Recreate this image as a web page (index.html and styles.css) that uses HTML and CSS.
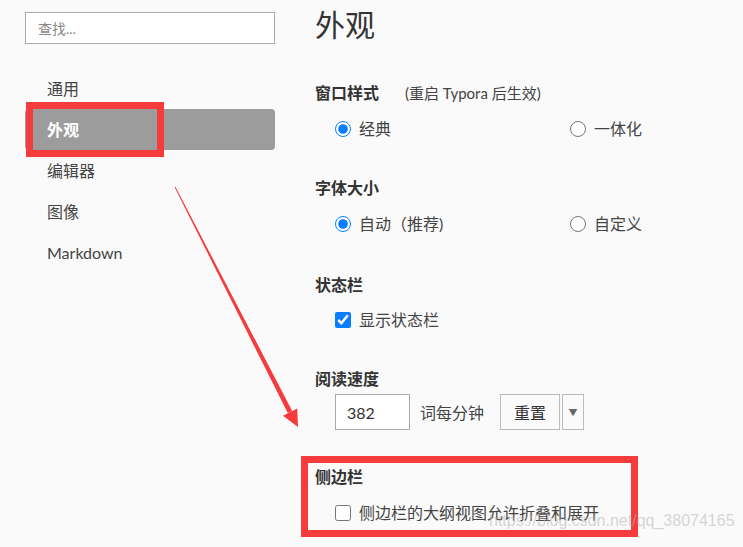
FILE: index.html
```html
<!DOCTYPE html>
<html lang="zh-CN">
<head>
    <meta charset="UTF-8">
    <title>偏好设置 - 外观</title>
    <link rel="stylesheet" href="styles.css">
</head>
<body>

    <div class="prefs">
        <aside class="sidebar">
            <input class="search" type="text" placeholder="查找...">
            <ul class="nav">
                <li class="nav-item">通用</li>
                <li class="nav-item active">外观<span class="mark mark-nav"></span></li>
                <li class="nav-item">编辑器</li>
                <li class="nav-item">图像</li>
                <li class="nav-item">Markdown</li>
            </ul>
        </aside>

        <main class="content">
            <h1 class="title">外观</h1>

            <section class="group">
                <h2 class="group-title">窗口样式<span class="note">(重启 Typora 后生效)</span></h2>
                <div class="options">
                    <label class="option"><input type="radio" name="win" checked>经典</label>
                    <label class="option"><input type="radio" name="win">一体化</label>
                </div>
            </section>

            <section class="group">
                <h2 class="group-title">字体大小</h2>
                <div class="options">
                    <label class="option"><input type="radio" name="size" checked>自动（推荐)</label>
                    <label class="option"><input type="radio" name="size">自定义</label>
                </div>
            </section>

            <section class="group group-status">
                <h2 class="group-title">状态栏</h2>
                <div class="options">
                    <label class="option"><input type="checkbox" checked>显示状态栏</label>
                </div>
            </section>

            <section class="group group-speed">
                <h2 class="group-title">阅读速度</h2>
                <div class="speed">
                    <input class="speed-input" type="text" value="382">
                    <span class="speed-unit">词每分钟</span>
                    <div class="split-btn">
                        <button class="btn">重置</button>
                        <button class="btn btn-drop">&#9660;</button>
                    </div>
                </div>
            </section>

            <section class="group group-sidebar">
                <span class="mark mark-section"></span>
                <h2 class="group-title">侧边栏</h2>
                <div class="options">
                    <label class="option"><input type="checkbox">侧边栏的大纲视图允许折叠和展开</label>
                </div>
            </section>
        </main>
    </div>

    <!-- annotation arrow drawn over the page -->
    <svg class="arrow" width="743" height="547" viewBox="0 0 743 547">
        <polygon points="174.6,187.2 175.4,186.8 292.2,410.9 287.8,413.1" fill="#f53b3b"/>
        <polygon points="283,415.8 297.2,408.4 298,427" fill="#f53b3b"/>
    </svg>

    <div class="watermark">https://blog.csdn.net/qq_38074165</div>

</body>
</html>
```

FILE: styles.css
```css
body {
    margin: 0;
    background-color: #fafafa;
    font-family: "Lato", "Noto Sans CJK SC", sans-serif;
    color: #444;
    font-size: 16px;
    position: relative;
    width: 743px;
    height: 547px;
    overflow: hidden;
}

.prefs {
    display: flex;
}

/* --- sidebar --- */
.sidebar {
    width: 250px;
    padding: 12px 25px 0;
    flex-shrink: 0;
}

.search {
    display: block;
    width: 250px;
    height: 32px;
    box-sizing: border-box;
    border: 1px solid #aaa;
    background: #fff;
    padding: 0 12px;
    font-family: inherit;
    font-size: 14px;
    color: #444;
    outline: none;
}

.search::placeholder {
    color: #888;
}

.nav {
    list-style: none;
    margin: 24px 0 0;
    padding: 0;
}

.nav-item {
    position: relative;
    height: 41px;
    line-height: 41px;
    padding-left: 22px;
    border-radius: 4px;
}

.nav-item.active {
    background-color: #9c9c9c;
    color: #fff;
    font-weight: bold;
}

/* red annotation boxes */
.mark {
    position: absolute;
    border: 7px solid #f53b3b;
    box-sizing: border-box;
    pointer-events: none;
}

.mark-nav {
    left: 1px;
    top: -7px;
    width: 138px;
    height: 55px;
}

.mark-section {
    left: -14px;
    top: -10px;
    width: 337px;
    height: 81px;
}

/* --- main content --- */
.content {
    padding-left: 15px;
    flex-grow: 1;
    min-width: 0;
}

.title {
    margin: 4px 0 38px;
    font-size: 30px;
    line-height: 40px;
    font-weight: normal;
    color: #333;
}

.group {
    position: relative;
    margin-bottom: 36px;
}

.group-status {
    margin-top: 38px;
}

.group-title {
    margin: 0;
    font-size: 16px;
    line-height: 22px;
    font-weight: bold;
    color: #333;
}

.note {
    font-weight: normal;
    font-size: 15px;
    color: #444;
    margin-left: 26px;
}

.options {
    display: flex;
    margin-top: 13px;
    padding-left: 20px;
}

.group-status .options {
    margin-top: 12px;
}

.option {
    display: flex;
    align-items: center;
    height: 24px;
    line-height: 24px;
    white-space: nowrap;
}

.option:first-child:not(:last-child) {
    width: 235px;
}

.option input {
    width: 16px;
    height: 16px;
    margin: 0 8px 0 0;
    accent-color: #0a7cff;
}

/* reading speed row */
.speed {
    display: flex;
    align-items: center;
    margin-top: 4px;
    padding-left: 20px;
}

.speed-input {
    width: 75px;
    height: 36px;
    box-sizing: border-box;
    border: 1px solid #aaa;
    background: #fff;
    padding: 0 11px;
    font-family: inherit;
    font-size: 16px;
    color: #333;
    outline: none;
}

.speed-unit {
    margin-left: 10px;
    width: 80px;
}

.split-btn {
    display: flex;
    gap: 2px;
}

.btn {
    height: 36px;
    width: 60px;
    border: 1px solid #bbb;
    background: #fafafa;
    font-family: inherit;
    font-size: 16px;
    color: #333;
    padding: 0;
}

.btn-drop {
    width: 22px;
    font-size: 9px;
    color: #666;
}

.group-sidebar {
    margin-bottom: 0;
}

/* overlays */
.arrow {
    position: absolute;
    left: 0;
    top: 0;
    pointer-events: none;
}

.watermark {
    position: absolute;
    left: 489px;
    top: 512px;
    font-family: "Liberation Sans", sans-serif;
    font-size: 16px;
    color: rgba(180, 180, 180, 0.55);
    white-space: nowrap;
}
```
